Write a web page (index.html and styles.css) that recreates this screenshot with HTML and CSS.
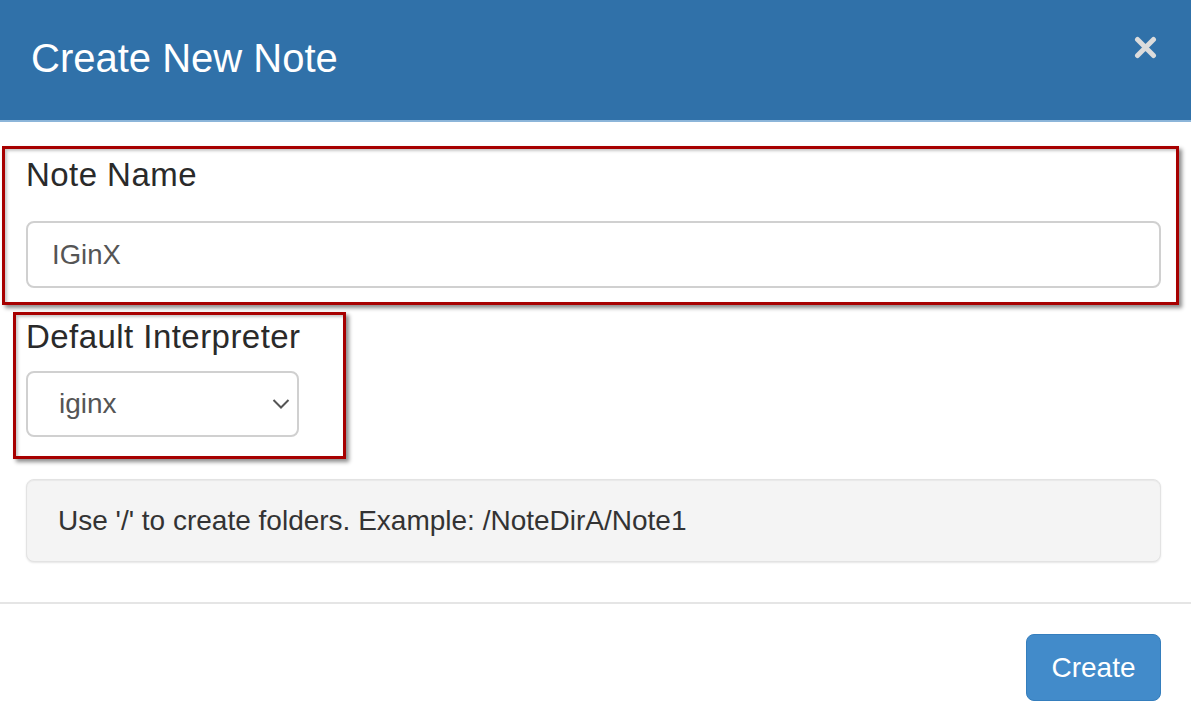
FILE: index.html
```html
<!DOCTYPE html>
<html lang="en">
<head>
<meta charset="utf-8">
<title>Create New Note</title>
<link rel="stylesheet" href="styles.css">
</head>
<body>
<div class="modal">
  <header class="modal-header">
    <h4 class="modal-title">Create New Note</h4>
    <button class="close" type="button" aria-label="Close">
      <svg width="23" height="23" viewBox="0 0 23 23"><path d="M3.5 3.5 L19.5 19.5 M19.5 3.5 L3.5 19.5" stroke="#dcdcdc" stroke-width="5" stroke-linecap="round" fill="none"/></svg>
    </button>
  </header>
  <div class="modal-body">
    <div class="mark mark-name">
      <label class="label">Note Name</label>
      <div class="control input">IGinX</div>
    </div>
    <div class="mark mark-interp">
      <label class="label">Default Interpreter</label>
      <div class="control select">
        <span>iginx</span>
        <svg class="chev" width="18" height="12" viewBox="0 0 18 12"><path d="M1.5 2 L9 9.5 L16.5 2" stroke="#555" stroke-width="2" fill="none"/></svg>
      </div>
    </div>
    <div class="well">Use '/' to create folders. Example: /NoteDirA/Note1</div>
  </div>
  <footer class="modal-footer">
    <button class="btn" type="button">Create</button>
  </footer>
</div>
</body>
</html>
```
FILE: styles.css
```css
* { box-sizing: border-box; }
html, body { margin: 0; padding: 0; background: #fff; }
body {
  font-family: "Liberation Sans", Arial, sans-serif;
  color: #333;
  width: 1191px;
  height: 724px;
  overflow: hidden;
}
.modal { display: flex; flex-direction: column; }
.modal-header {
  height: 122px;
  background: #3071a9;
  border-bottom: 2px solid #8cb5d9;
  display: flex;
  align-items: flex-start;
  justify-content: space-between;
  padding: 34px 34px 0 31px;
}
.modal-title {
  margin: 0;
  font-size: 40px;
  line-height: 48px;
  font-weight: normal;
  color: #fff;
}
.close {
  margin-top: 2px;
  padding: 0;
  border: 0;
  background: transparent;
  width: 23px;
  height: 23px;
  display: flex;
}
.modal-body { padding-top: 24px; }
.mark {
  border: 3px solid #a70000;
  box-shadow: 3px 3px 4px rgba(0, 0, 0, 0.45), inset 2px 2px 3px rgba(0, 0, 0, 0.22);
}
.mark-name {
  margin: 0 12px 0 2px;
  padding: 6px 15px 14px 21px;
}
.mark-interp {
  margin: 7px 0 0 13px;
  width: 333px;
  padding: 2px 44px 19px 10px;
}
.label {
  display: block;
  font-size: 33px;
  line-height: 40px;
  letter-spacing: 0.45px;
  white-space: nowrap;
  color: #2a2a2a;
}
.control {
  border: 2px solid #d0d0d0;
  border-radius: 8px;
  background: #fff;
  display: flex;
  align-items: center;
  font-size: 27.5px;
  color: #555;
}
.input {
  margin-top: 26px;
  height: 67px;
  padding-left: 24px;
}
.select {
  margin-top: 14px;
  height: 66px;
  padding: 0 7px 0 31px;
  justify-content: space-between;
  font-size: 28px;
}
.well {
  margin: 20px 30px 0 26px;
  height: 83px;
  background: #f4f4f4;
  border: 1.5px solid #e3e3e3;
  border-radius: 8px;
  box-shadow: inset 0 1px 1px rgba(0,0,0,0.05), 0 1px 2px rgba(0,0,0,0.1);
  display: flex;
  align-items: center;
  padding: 0 31px;
  font-size: 28px;
  color: #333;
}
.modal-footer {
  margin-top: 40px;
  border-top: 2px solid #e5e5e5;
  padding: 30px 30px 0 0;
  display: flex;
  justify-content: flex-end;
}
.btn {
  width: 135px;
  height: 67px;
  background: #428bca;
  border: 1.5px solid #357ebd;
  border-radius: 8px;
  color: #fff;
  font-family: "Liberation Sans", Arial, sans-serif;
  font-size: 28px;
  padding: 0;
}
```
